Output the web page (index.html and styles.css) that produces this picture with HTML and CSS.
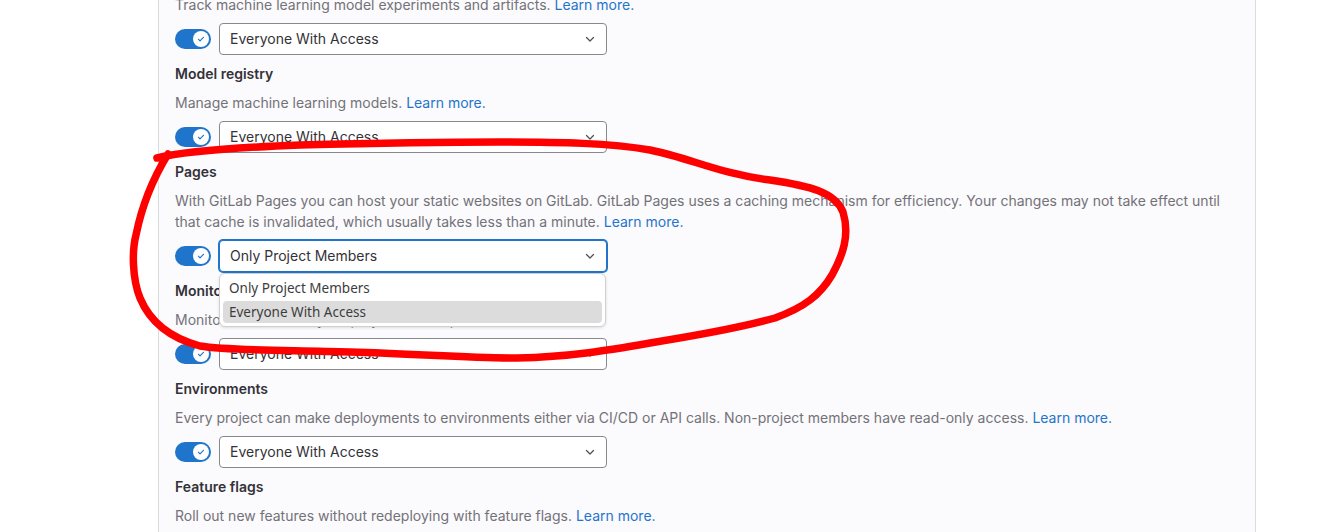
FILE: index.html
```html
<!DOCTYPE html>
<html lang="en">
<head>
<meta charset="utf-8">
<title>Visibility settings</title>
<link rel="stylesheet" href="styles.css">
</head>
<body>
<div class="page">
  <div class="gutter"></div>
  <div class="panel">
    <section class="feature">
      <div class="heading">Model experiments</div>
      <p class="desc">Track machine learning model experiments and artifacts. <a href="#">Learn more.</a></p>
      <div class="row">
        <span class="toggle"><span class="knob"><svg viewBox="0 0 16 16" width="12" height="12"><path d="M4.5 8.3l2.2 2.2 4.6-4.8" fill="none" stroke="#1f75cb" stroke-width="1.5" stroke-linecap="round" stroke-linejoin="round"/></svg></span></span>
        <div class="select"><span>Everyone With Access</span><svg class="chev" viewBox="0 0 16 16" width="16" height="16"><path d="M4.5 6.5L8 10l3.5-3.5" fill="none" stroke="#535158" stroke-width="1.3" stroke-linecap="round" stroke-linejoin="round"/></svg></div>
      </div>
    </section>
    <section class="feature">
      <div class="heading">Model registry</div>
      <p class="desc">Manage machine learning models. <a href="#">Learn more.</a></p>
      <div class="row">
        <span class="toggle"><span class="knob"><svg viewBox="0 0 16 16" width="12" height="12"><path d="M4.5 8.3l2.2 2.2 4.6-4.8" fill="none" stroke="#1f75cb" stroke-width="1.5" stroke-linecap="round" stroke-linejoin="round"/></svg></span></span>
        <div class="select"><span>Everyone With Access</span><svg class="chev" viewBox="0 0 16 16" width="16" height="16"><path d="M4.5 6.5L8 10l3.5-3.5" fill="none" stroke="#535158" stroke-width="1.3" stroke-linecap="round" stroke-linejoin="round"/></svg></div>
      </div>
    </section>
    <section class="feature">
      <div class="heading">Pages</div>
      <p class="desc">With GitLab Pages you can host your static websites on GitLab. GitLab Pages uses a caching mechanism for efficiency. Your changes may not take effect until that cache is invalidated, which usually takes less than a minute. <a href="#">Learn more.</a></p>
      <div class="row">
        <span class="toggle"><span class="knob"><svg viewBox="0 0 16 16" width="12" height="12"><path d="M4.5 8.3l2.2 2.2 4.6-4.8" fill="none" stroke="#1f75cb" stroke-width="1.5" stroke-linecap="round" stroke-linejoin="round"/></svg></span></span>
        <div class="select-wrap">
          <div class="select focused"><span>Only Project Members</span><svg class="chev" viewBox="0 0 16 16" width="16" height="16"><path d="M4.5 6.5L8 10l3.5-3.5" fill="none" stroke="#535158" stroke-width="1.3" stroke-linecap="round" stroke-linejoin="round"/></svg></div>
          <ul class="menu">
            <li class="opt">Only Project Members</li>
            <li class="opt active">Everyone With Access</li>
          </ul>
        </div>
      </div>
    </section>
    <section class="feature">
      <div class="heading">Monitor</div>
      <p class="desc">Monitor the health of your project and respond to incidents.</p>
      <div class="row">
        <span class="toggle"><span class="knob"><svg viewBox="0 0 16 16" width="12" height="12"><path d="M4.5 8.3l2.2 2.2 4.6-4.8" fill="none" stroke="#1f75cb" stroke-width="1.5" stroke-linecap="round" stroke-linejoin="round"/></svg></span></span>
        <div class="select"><span>Everyone With Access</span><svg class="chev" viewBox="0 0 16 16" width="16" height="16"><path d="M4.5 6.5L8 10l3.5-3.5" fill="none" stroke="#535158" stroke-width="1.3" stroke-linecap="round" stroke-linejoin="round"/></svg></div>
      </div>
    </section>
    <section class="feature">
      <div class="heading">Environments</div>
      <p class="desc">Every project can make deployments to environments either via CI/CD or API calls. Non-project members have read-only access. <a href="#">Learn more.</a></p>
      <div class="row">
        <span class="toggle"><span class="knob"><svg viewBox="0 0 16 16" width="12" height="12"><path d="M4.5 8.3l2.2 2.2 4.6-4.8" fill="none" stroke="#1f75cb" stroke-width="1.5" stroke-linecap="round" stroke-linejoin="round"/></svg></span></span>
        <div class="select"><span>Everyone With Access</span><svg class="chev" viewBox="0 0 16 16" width="16" height="16"><path d="M4.5 6.5L8 10l3.5-3.5" fill="none" stroke="#535158" stroke-width="1.3" stroke-linecap="round" stroke-linejoin="round"/></svg></div>
      </div>
    </section>
    <section class="feature">
      <div class="heading">Feature flags</div>
      <p class="desc">Roll out new features without redeploying with feature flags. <a href="#">Learn more.</a></p>
    </section>
  </div>
  <div class="gutter"></div>
</div>
<svg class="scribble" viewBox="0 0 1327 532" width="1327" height="532">
  <path d="M157 158 C 190 150, 250 147, 300 145 C 380 143, 450 142, 500 142 C 560 142, 610 143, 650 150 C 690 158, 720 174, 770 180 C 810 186, 835 192, 843 212 C 850 235, 843 255, 832 275 C 820 295, 805 307, 775 318 C 740 328, 700 335, 650 343 C 610 350, 570 357, 517 358 C 470 358, 420 354, 350 352 C 290 350, 230 351, 200 346 C 170 338, 150 322, 140 298 C 132 278, 132 250, 136 235 C 142 205, 152 180, 168 154" fill="none" stroke="#ff0000" stroke-width="7.5" stroke-linecap="round" stroke-linejoin="round"/>
</svg>
</body>
</html>
```

FILE: styles.css
```css
* {
  box-sizing: border-box;
}

html, body {
  margin: 0;
  padding: 0;
  background: #ffffff;
  overflow: hidden;
  height: 532px;
}

body {
  font-family: Inter, "Noto Sans", "Liberation Sans", sans-serif;
  font-size: 14px;
  color: #333238;
  position: relative;
}

.page {
  display: grid;
  grid-template-columns: 158px 1098px 1fr;
  margin-top: -34px;
  height: 566px;
}

.panel {
  background: #fbfafd;
  border-left: 1px solid #dcdcde;
  border-right: 1px solid #dcdcde;
  padding: 0 16px;
}

.feature {
  padding-bottom: 9px;
}

.heading {
  font-weight: 600;
  line-height: 20px;
  height: 20px;
  margin-bottom: 8px;
  color: #333238;
}

.desc {
  margin: 0 0 8px;
  line-height: 21px;
  color: #737278;
}

.desc a {
  color: #1f75cb;
  text-decoration: none;
}

.row {
  display: flex;
  align-items: center;
  gap: 8px;
  height: 32px;
}

.toggle {
  width: 36px;
  height: 20px;
  border-radius: 10px;
  background: #1f75cb;
  display: flex;
  align-items: center;
  justify-content: flex-end;
  padding: 2px;
  flex: none;
}

.knob {
  width: 16px;
  height: 16px;
  border-radius: 50%;
  background: #ffffff;
  display: flex;
  align-items: center;
  justify-content: center;
}

.select-wrap {
  position: relative;
  width: 388px;
  height: 32px;
}

.select {
  width: 388px;
  height: 32px;
  background: #ffffff;
  border: 1px solid #89888d;
  border-radius: 4px;
  display: flex;
  align-items: center;
  justify-content: space-between;
  padding: 0 8px 1px 10px;
  font-size: 14px;
  color: #333238;
}

.select.focused {
  border-color: #1f75cb;
  box-shadow: 0 0 0 1px #1f75cb;
}

.chev {
  flex: none;
}

.menu {
  position: absolute;
  top: 33px;
  left: 0;
  width: 387px;
  margin: 0;
  padding: 3px;
  list-style: none;
  display: flex;
  flex-direction: column;
  gap: 2px;
  background: #ffffff;
  border: 1px solid #d0d0d0;
  border-radius: 6px;
  box-shadow: 0 1px 3px rgba(0, 0, 0, 0.12);
  font-family: "Noto Sans", "DejaVu Sans", sans-serif;
  font-size: 13.5px;
  color: #3c3c3c;
  z-index: 2;
}

.opt {
  height: 22px;
  line-height: 22px;
  padding: 0 6px;
  border-radius: 4px;
}

.opt.active {
  background: #dcdcdc;
}

.scribble {
  position: absolute;
  left: 0;
  top: 0;
  pointer-events: none;
  z-index: 5;
}
```
